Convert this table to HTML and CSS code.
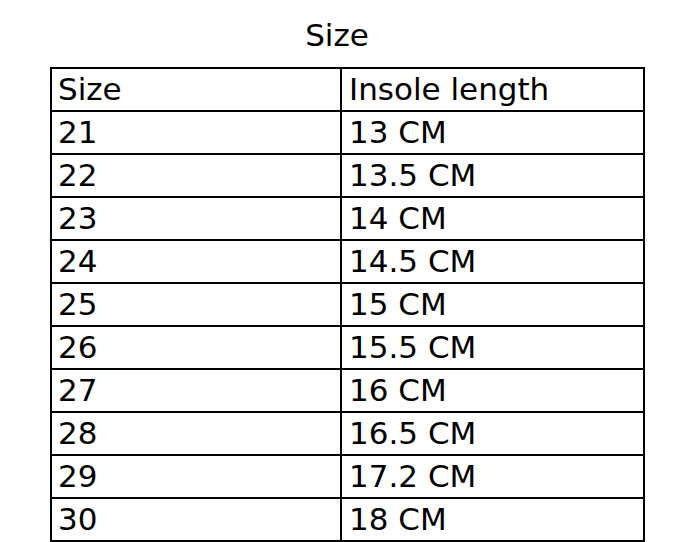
FILE: index.html
```html
<!DOCTYPE html>
<html>
<head>
<meta charset="utf-8">
<link rel="stylesheet" href="styles.css">
</head>
<body>
<div class="title">Size</div>
<table class="size-table">
  <tr><td>Size</td><td>Insole length</td></tr>
  <tr><td>21</td><td>13 CM</td></tr>
  <tr><td>22</td><td>13.5 CM</td></tr>
  <tr><td>23</td><td>14 CM</td></tr>
  <tr><td>24</td><td>14.5 CM</td></tr>
  <tr><td>25</td><td>15 CM</td></tr>
  <tr><td>26</td><td>15.5 CM</td></tr>
  <tr><td>27</td><td>16 CM</td></tr>
  <tr><td>28</td><td>16.5 CM</td></tr>
  <tr><td>29</td><td>17.2 CM</td></tr>
  <tr><td>30</td><td>18 CM</td></tr>
</table>
</body>
</html>
```
FILE: styles.css
```css
html, body {
  margin: 0;
  padding: 0;
  background: #fff;
}
body {
  width: 674px;
  height: 542px;
  overflow: hidden;
  font-family: "DejaVu Sans", Verdana, sans-serif;
  color: #000;
}
.title {
  height: 67px;
  line-height: 70px;
  text-align: center;
  font-size: 31px;
}
.size-table {
  margin-left: 50px;
  width: 595px;
  border-collapse: collapse;
  font-size: 31px;
}
.size-table td {
  border: 2px solid #000;
  height: 41px;
  padding: 0 0 0 6px;
  line-height: 41px;
  vertical-align: middle;
}
.size-table td:first-child {
  width: 282px;
}
.size-table td:last-child {
  padding-left: 7px;
}
```
